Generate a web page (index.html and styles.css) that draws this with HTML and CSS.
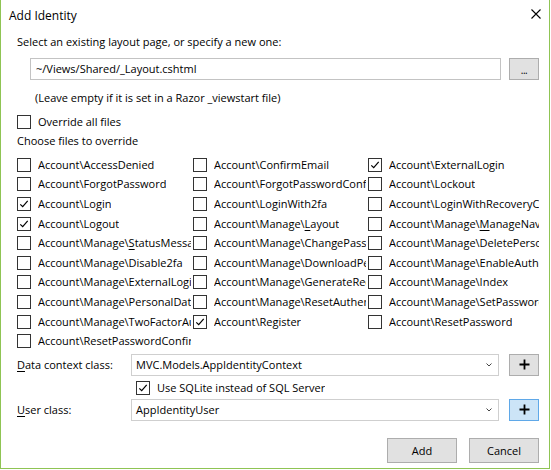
FILE: index.html
```html
<!DOCTYPE html>
<html>
<head>
<meta charset="utf-8">
<title>Add Identity</title>
<link rel="stylesheet" href="styles.css">
</head>
<body>
<div class="window">
  <div class="titlebar">
    <span class="title">Add Identity</span>
    <svg class="close" width="10" height="10" viewBox="0 0 10 10"><path d="M0.5 0.5L9.5 9.5M9.5 0.5L0.5 9.5" stroke="#000" stroke-width="1.1" fill="none"/></svg>
  </div>
  <div class="content">
    <div class="line">Select an existing layout page, or specify a new one:</div>
    <div class="pathrow">
      <div class="textbox">~/Views/Shared/_Layout.cshtml</div>
      <div class="btn square dots">...</div>
    </div>
    <div class="line hint">(Leave empty if it is set in a Razor _viewstart file)</div>
    <div class="check override"><span class="box"></span><span class="text">Override all files</span></div>
    <div class="line choose">Choose files to override</div>
    <div class="files">
      <div class="check"><span class="box"></span><span class="text">Account\AccessDenied</span></div>
      <div class="check"><span class="box"></span><span class="text">Account\ConfirmEmail</span></div>
      <div class="check"><span class="box checked"><svg width="12" height="12" viewBox="0 0 12 12"><path d="M2.3 6.3L4.7 8.7L9.7 2.9" stroke="#000" stroke-width="1.2" fill="none"/></svg></span><span class="text">Account\ExternalLogin</span></div>

      <div class="check"><span class="box"></span><span class="text">Account\ForgotPassword</span></div>
      <div class="check"><span class="box"></span><span class="text">Account\ForgotPasswordConfirmation</span></div>
      <div class="check"><span class="box"></span><span class="text">Account\Lockout</span></div>

      <div class="check"><span class="box checked"><svg width="12" height="12" viewBox="0 0 12 12"><path d="M2.3 6.3L4.7 8.7L9.7 2.9" stroke="#000" stroke-width="1.2" fill="none"/></svg></span><span class="text">Account\Login</span></div>
      <div class="check"><span class="box"></span><span class="text">Account\LoginWith2fa</span></div>
      <div class="check"><span class="box"></span><span class="text">Account\LoginWithRecoveryCode</span></div>

      <div class="check"><span class="box checked"><svg width="12" height="12" viewBox="0 0 12 12"><path d="M2.3 6.3L4.7 8.7L9.7 2.9" stroke="#000" stroke-width="1.2" fill="none"/></svg></span><span class="text">Account\Logout</span></div>
      <div class="check"><span class="box"></span><span class="text">Account\Manage\<u>L</u>ayout</span></div>
      <div class="check"><span class="box"></span><span class="text">Account\Manage\<u>M</u>anageNav</span></div>

      <div class="check"><span class="box"></span><span class="text">Account\Manage\<u>S</u>tatusMessage</span></div>
      <div class="check"><span class="box"></span><span class="text">Account\Manage\ChangePassword</span></div>
      <div class="check"><span class="box"></span><span class="text">Account\Manage\DeletePersonalData</span></div>

      <div class="check"><span class="box"></span><span class="text">Account\Manage\Disable2fa</span></div>
      <div class="check"><span class="box"></span><span class="text">Account\Manage\DownloadPersonalData</span></div>
      <div class="check"><span class="box"></span><span class="text">Account\Manage\EnableAuthenticator</span></div>

      <div class="check"><span class="box"></span><span class="text">Account\Manage\ExternalLogins</span></div>
      <div class="check"><span class="box"></span><span class="text">Account\Manage\GenerateRecoveryCodes</span></div>
      <div class="check"><span class="box"></span><span class="text">Account\Manage\Index</span></div>

      <div class="check"><span class="box"></span><span class="text">Account\Manage\PersonalData</span></div>
      <div class="check"><span class="box"></span><span class="text">Account\Manage\ResetAuthenticator</span></div>
      <div class="check"><span class="box"></span><span class="text">Account\Manage\SetPassword</span></div>

      <div class="check"><span class="box"></span><span class="text">Account\Manage\TwoFactorAuthentication</span></div>
      <div class="check"><span class="box checked"><svg width="12" height="12" viewBox="0 0 12 12"><path d="M2.3 6.3L4.7 8.7L9.7 2.9" stroke="#000" stroke-width="1.2" fill="none"/></svg></span><span class="text">Account\Register</span></div>
      <div class="check"><span class="box"></span><span class="text">Account\ResetPassword</span></div>

      <div class="check"><span class="box"></span><span class="text">Account\ResetPasswordConfirmation</span></div>
    </div>

    <div class="formrow">
      <span class="flabel"><u>D</u>ata context class:</span>
      <div class="combo"><span class="value">MVC.Models.AppIdentityContext</span><svg class="chev" width="6" height="4" viewBox="0 0 6 4"><path d="M0.5 0.5L3 3L5.5 0.5" stroke="#444" stroke-width="1" fill="none"/></svg></div>
      <div class="btn square"><svg width="11" height="11" viewBox="0 0 11 11"><path d="M5.5 0.5V10.5M0.5 5.5H10.5" stroke="#000" stroke-width="1.8" fill="none"/></svg></div>
    </div>
    <div class="sqlrow">
      <div class="check"><span class="box checked"><svg width="12" height="12" viewBox="0 0 12 12"><path d="M2.3 6.3L4.7 8.7L9.7 2.9" stroke="#000" stroke-width="1.2" fill="none"/></svg></span><span class="text">Use SQLite instead of SQL Server</span></div>
    </div>
    <div class="formrow user">
      <span class="flabel"><u>U</u>ser class:</span>
      <div class="combo"><span class="value">AppIdentityUser</span><svg class="chev" width="6" height="4" viewBox="0 0 6 4"><path d="M0.5 0.5L3 3L5.5 0.5" stroke="#444" stroke-width="1" fill="none"/></svg></div>
      <div class="btn square focused"><svg width="11" height="11" viewBox="0 0 11 11"><path d="M5.5 0.5V10.5M0.5 5.5H10.5" stroke="#000" stroke-width="1.8" fill="none"/></svg></div>
    </div>
    <div class="actions">
      <div class="btn action">Add</div>
      <div class="btn action">Cancel</div>
    </div>
  </div>
</div>
</body>
</html>
```

FILE: styles.css
```css
* { box-sizing: border-box; }
html, body { margin: 0; padding: 0; background: #fff; }
body {
  font-family: "Segoe UI", "Open Sans", "Noto Sans", sans-serif;
  font-size: 11px;
  color: #000;
  width: 551px;
  height: 470px;
  overflow: hidden;
}
.window {
  width: 550px;
  height: 469px;
  border: 1px solid #8fc454;
  border-top: none;
  background: #fff;
}
.titlebar {
  height: 30px;
  display: flex;
  align-items: center;
  justify-content: space-between;
  padding: 0 8px 0 8px;
}
.title { font-size: 12px; line-height: 16px; margin-top: 1px; }
.close { margin-top: -2px; }
.content {
  padding: 0 10px 0 16px;
  display: flex;
  flex-direction: column;
}
.line { line-height: 16px; height: 16px; white-space: nowrap; }
.content > .line:first-child { margin-top: 4px; }
.pathrow {
  display: flex;
  gap: 8px;
  margin-top: 8px;
  height: 22px;
  padding-left: 13px;
}
.textbox {
  width: 471px;
  height: 22px;
  border: 1px solid #c3c3c3;
  line-height: 20px;
  padding-left: 5px;
}
.btn {
  background: #e1e1e1;
  border: 1px solid #adadad;
  display: flex;
  align-items: center;
  justify-content: center;
}
.square { width: 30px; height: 22px; }
.dots { font-size: 10px; line-height: 20px; padding-top: 2px; letter-spacing: -0.5px; }
.focused { background: #cce4f7; border-color: #5fa8e8; }
.hint { margin-top: 10px; padding-left: 18px; }
.check {
  display: flex;
  align-items: center;
  height: 16px;
  min-width: 0;
}
.box {
  flex: none;
  width: 14px;
  height: 14px;
  border: 1px solid #333;
  background: #fff;
  display: flex;
  align-items: center;
  justify-content: center;
}
.check .text {
  margin-left: 7px;
  white-space: nowrap;
  overflow: hidden;
  line-height: 16px;
}
.override { margin-top: 8px; }
.choose { margin-top: 3px; }
.files {
  margin-top: 6px;
  display: grid;
  grid-template-columns: 176px 175px 173px;
  grid-auto-rows: 19.6px;
}
.files .check { height: 19.6px; padding-right: 2px; }
u { text-decoration-thickness: 1px; text-underline-offset: 2px; }
.formrow {
  display: flex;
  align-items: center;
  margin-top: 3px;
  height: 22px;
}
.flabel { width: 114px; flex: none; white-space: nowrap; margin-top: -1px; }
.combo {
  width: 368px;
  height: 22px;
  border: 1px solid #cfcfcf;
  display: flex;
  align-items: center;
  justify-content: space-between;
  padding: 0 6px 0 4px;
}
.combo .value { line-height: 20px; }
.chev { margin-top: 1px; }
.formrow .btn { margin-left: 10px; }
.sqlrow {
  margin-top: 4px;
  height: 16px;
  padding-left: 119px;
  display: flex;
}
.actions {
  margin-top: 17px;
  display: flex;
  justify-content: flex-end;
  gap: 12px;
  padding-right: 0;
}
.action { width: 70px; height: 25px; line-height: 23px; }
```
